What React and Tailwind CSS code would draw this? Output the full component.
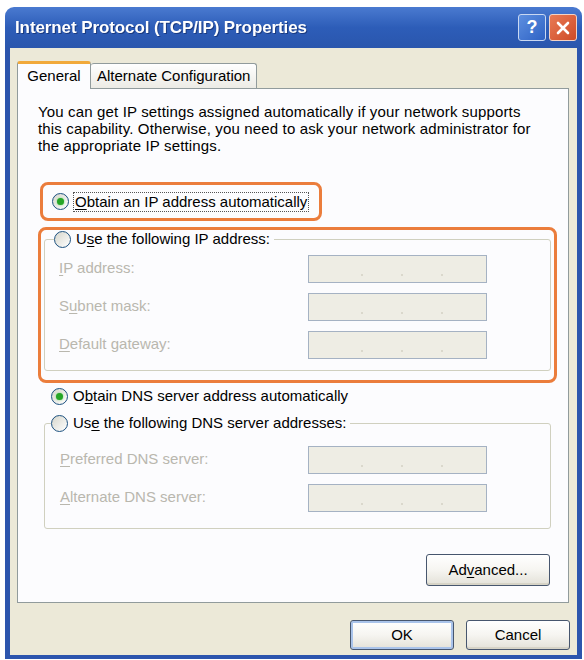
import React from 'react';

const font = { fontFamily: '"Liberation Sans", Arial, sans-serif' };

const Radio = ({ checked }) => (
  <span className="relative inline-flex items-center justify-center w-[17px] h-[17px] rounded-full border border-[#1c5180] bg-gradient-to-br from-[#d6d6cc] to-white shrink-0">
    {checked && (
      <span className="w-[7px] h-[7px] rounded-full bg-[#27a527] shadow-[0_0_2px_#6fd86f]" />
    )}
  </span>
);

// underlined access key helper
const Key = ({ children }) => <span className="underline underline-offset-2">{children}</span>;

const IpField = () => (
  <div className="w-[179px] h-[28px] border border-[#a5b2c3] bg-[#eeede4] flex items-end justify-center gap-[38px] pb-[6px] pl-[8px]">
    <span className="w-[2px] h-[2px] bg-[#dad8cc]" />
    <span className="w-[2px] h-[2px] bg-[#dad8cc]" />
    <span className="w-[2px] h-[2px] bg-[#dad8cc]" />
  </div>
);

const FieldRow = ({ label }) => (
  <div className="flex items-center justify-between pl-[10px] pr-[63px]">
    <span className="text-[#b9b7ae]">{label}</span>
    <IpField />
  </div>
);

const XpButton = ({ children, focused, className = '' }) => (
  <button
    className={
      'rounded-[3px] border border-[#47566e] bg-gradient-to-b from-white via-[#f6f5f1] to-[#e3e1d8] text-[15px] text-black ' +
      (focused ? 'shadow-[inset_0_0_0_2px_#a9c3ea] ' : 'shadow-[inset_0_-2px_0_#d6d3c6] ') +
      className
    }
  >
    {children}
  </button>
);

export default function App() {
  return (
    <div className="w-[584px] h-[660px] bg-white overflow-hidden pt-[7px] pl-[5px]" style={font}>
      <div className="w-[577px]">
        {/* Title bar */}
        <div className="h-[41px] rounded-t-[9px] bg-gradient-to-b from-[#4a7ad0] via-[#2d5db8] to-[#2a56ad] flex items-center pl-[10px] pr-[5px]">
          <span className="text-white font-bold text-[17px] tracking-[-0.1px] drop-shadow-[1px_1px_0_#1a3a80]">
            Internet Protocol (TCP/IP) Properties
          </span>
          <div className="ml-auto flex gap-[3px]">
            <div className="w-[28px] h-[27px] rounded-[3px] border border-[#c9d8f2] bg-gradient-to-br from-[#5d8fe0] to-[#2f62c4] flex items-center justify-center text-white font-bold text-[18px]">
              ?
            </div>
            <div className="w-[28px] h-[27px] rounded-[3px] border border-[#f3d2c4] bg-gradient-to-br from-[#e87a55] to-[#cf4a26] flex items-center justify-center">
              <svg width="16" height="16" viewBox="0 0 16 16">
                <path d="M3 3 L13 13 M13 3 L3 13" stroke="white" strokeWidth="2.6" strokeLinecap="round" />
              </svg>
            </div>
          </div>
        </div>

        {/* Body */}
        <div className="bg-[#ece9d8] border-x-[5px] border-b-[4px] border-[#2c55ad] pt-[12px] pl-[7px] pb-[5px] text-[15px] text-black">
          {/* Tabs */}
          <div className="flex items-end h-[28px]">
            <div className="h-[28px] w-[74px] border border-b-0 border-[#919b9c] border-t-[3px] border-t-[#f1a93a] rounded-t-[3px] bg-[#fcfcfe] flex items-center justify-center relative z-10 -mb-px">
              General
            </div>
            <div className="h-[25px] px-[6px] border border-b-0 border-l-0 border-[#919b9c] rounded-t-[3px] bg-gradient-to-b from-white to-[#ecebe5] flex items-center">
              Alternate Configuration
            </div>
          </div>

          {/* Panel */}
          <div className="mr-[8px] h-[515px] border border-[#919b9c] bg-[#fcfcfe] flex flex-col">
            <p className="ml-[20px] mt-[14px] leading-[17px] tracking-[0.15px]">
              You can get IP settings assigned automatically if your network supports
              <br />
              this capability. Otherwise, you need to ask your network administrator for
              <br />
              the appropriate IP settings.
            </p>

            {/* Highlight 1 */}
            <div className="ml-[22px] mt-[28px] w-[282px] h-[39px] border-[3px] border-[#eb7d3c] rounded-[8px] flex items-center pl-[9px] gap-[5px]">
              <Radio checked />
              <span className="outline outline-1 outline-dotted outline-[#555] px-[1px] leading-[18px]">
                <Key>O</Key>btain an IP address automatically
              </span>
            </div>

            {/* Highlight 2 */}
            <div className="ml-[20px] mt-[6px] w-[519px] h-[156px] border-[3px] border-[#eb7d3c] rounded-[8px] pl-[3px] pr-[3px]">
              <fieldset className="h-[143px] mt-[-2px] border border-[#d0d0bf] rounded-[3px] pl-[4px]">
                <legend className="flex items-center gap-[5px] pr-[4px] ml-[5px]">
                  <Radio />
                  <span>
                    U<Key>s</Key>e the following IP address:
                  </span>
                </legend>
                <div className="flex flex-col gap-[10px] mt-[4px]">
                  <FieldRow label={<><Key>I</Key>P address:</>} />
                  <FieldRow label={<>S<Key>u</Key>bnet mask:</>} />
                  <FieldRow label={<><Key>D</Key>efault gateway:</>} />
                </div>
              </fieldset>
            </div>

            {/* DNS */}
            <div className="ml-[33px] mt-[3px] flex items-center gap-[5px] h-[20px]">
              <Radio checked />
              <span>
                O<Key>b</Key>tain DNS server address automatically
              </span>
            </div>
            <fieldset className="ml-[26px] mr-[17px] mt-[6px] h-[117px] border border-[#d0d0bf] rounded-[3px] pl-[5px]">
              <legend className="flex items-center gap-[5px] pr-[4px] ml-[1px]">
                <Radio />
                <span>
                  Us<Key>e</Key> the following DNS server addresses:
                </span>
              </legend>
              <div className="flex flex-col gap-[10px] mt-[11px]">
                <FieldRow label={<><Key>P</Key>referred DNS server:</>} />
                <FieldRow label={<><Key>A</Key>lternate DNS server:</>} />
              </div>
            </fieldset>

            <div className="flex justify-end mr-[18px] mt-[25px]">
              <XpButton className="w-[124px] h-[32px]">
                Ad<Key>v</Key>anced...
              </XpButton>
            </div>
          </div>

          {/* Dialog buttons */}
          <div className="flex justify-end gap-[12px] mr-[7px] mt-[17px]">
            <XpButton focused className="w-[104px] h-[30px]">OK</XpButton>
            <XpButton className="w-[104px] h-[30px]">Cancel</XpButton>
          </div>
        </div>
      </div>
    </div>
  );
}
